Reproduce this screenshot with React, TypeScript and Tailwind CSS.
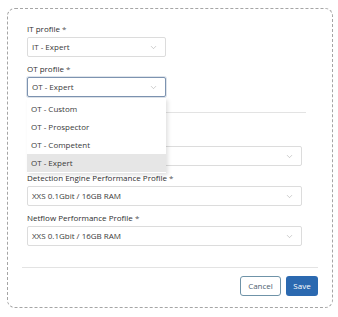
import { ChevronDown } from "lucide-react";

interface FieldProps {
  label: string;
  value: string;
  wide?: boolean;
  focused?: boolean;
}

function SelectField({ label, value, wide, focused }: FieldProps) {
  return (
    <div className="flex flex-col">
      <label className="h-[12px] text-[8px] leading-[12px] text-[#2f2f2f]">
        {label && (
          <>
            {label} <span className="text-[#555]">*</span>
          </>
        )}
      </label>
      <div
        className={`mt-[2px] flex h-[20px] items-center justify-between rounded-[2px] border bg-white pl-[4px] pr-[7px] ${
          wide ? "w-[275px]" : "w-[139px]"
        } ${
          focused
            ? "border-[#7d93b0] shadow-[0_0_0_1px_rgba(125,147,176,0.25)]"
            : "border-[#dcdcdc]"
        }`}
      >
        <span className="text-[8px] leading-none text-[#3a3a3a]">{value}</span>
        <ChevronDown className="h-[9px] w-[9px] text-[#999]" strokeWidth={1.25} />
      </div>
    </div>
  );
}

const OPTIONS = ["OT - Custom", "OT - Prospector", "OT - Competent", "OT - Expert"];

export default function App() {
  return (
    <div
      className="h-[317px] w-[338px] bg-white pl-[7px] pr-[5px] pt-[8px]"
      style={{ fontFamily: '"Open Sans", "Noto Sans", sans-serif' }}
    >
      <div className="flex h-[300px] flex-col rounded-[8px] border border-dashed border-[#a5a5a5] px-[14px]">
        <div className="flex flex-col gap-[6px] pl-[5px] pt-[14px]">
          <SelectField label="IT profile" value="IT - Expert" />
          <div className="relative">
            <SelectField label="OT profile" value="OT - Expert" focused />
            <div className="absolute left-0 top-[35px] z-10 w-[139px] bg-white pb-[1px] pt-[2px] shadow-[2px_2px_4px_rgba(0,0,0,0.12)]">
              {OPTIONS.map((opt, i) => (
                <div
                  key={opt}
                  className={`flex h-[18px] items-center pl-[4px] text-[8px] text-[#3a3a3a] ${
                    i === OPTIONS.length - 1 ? "bg-[#e6e6e6]" : ""
                  }`}
                >
                  {opt}
                </div>
              ))}
            </div>
          </div>
          <div className="mt-[9px] h-px w-[279px] bg-[#e3e3e3]" />
          {/* field hidden under the open dropdown */}
          <div className="mt-[13px]">
            <SelectField label="" value="" wide />
          </div>
          <SelectField
            label="Detection Engine Performance Profile"
            value="XXS 0.1Gbit / 16GB RAM"
            wide
          />
          <SelectField label="Netflow Performance Profile" value="XXS 0.1Gbit / 16GB RAM" wide />
        </div>
        <div className="mt-auto mb-[11px] border-t border-[#e3e3e3] pt-[8px]">
          <div className="flex justify-end gap-[5px]">
            <button className="h-[20px] w-[41px] rounded-[3px] border border-[#6f93a8] bg-white text-[8px] text-[#4d6170]">
              Cancel
            </button>
            <button className="h-[20px] w-[32px] rounded-[3px] bg-[#2b69b0] text-[8px] text-white">
              Save
            </button>
          </div>
        </div>
      </div>
    </div>
  );
}
